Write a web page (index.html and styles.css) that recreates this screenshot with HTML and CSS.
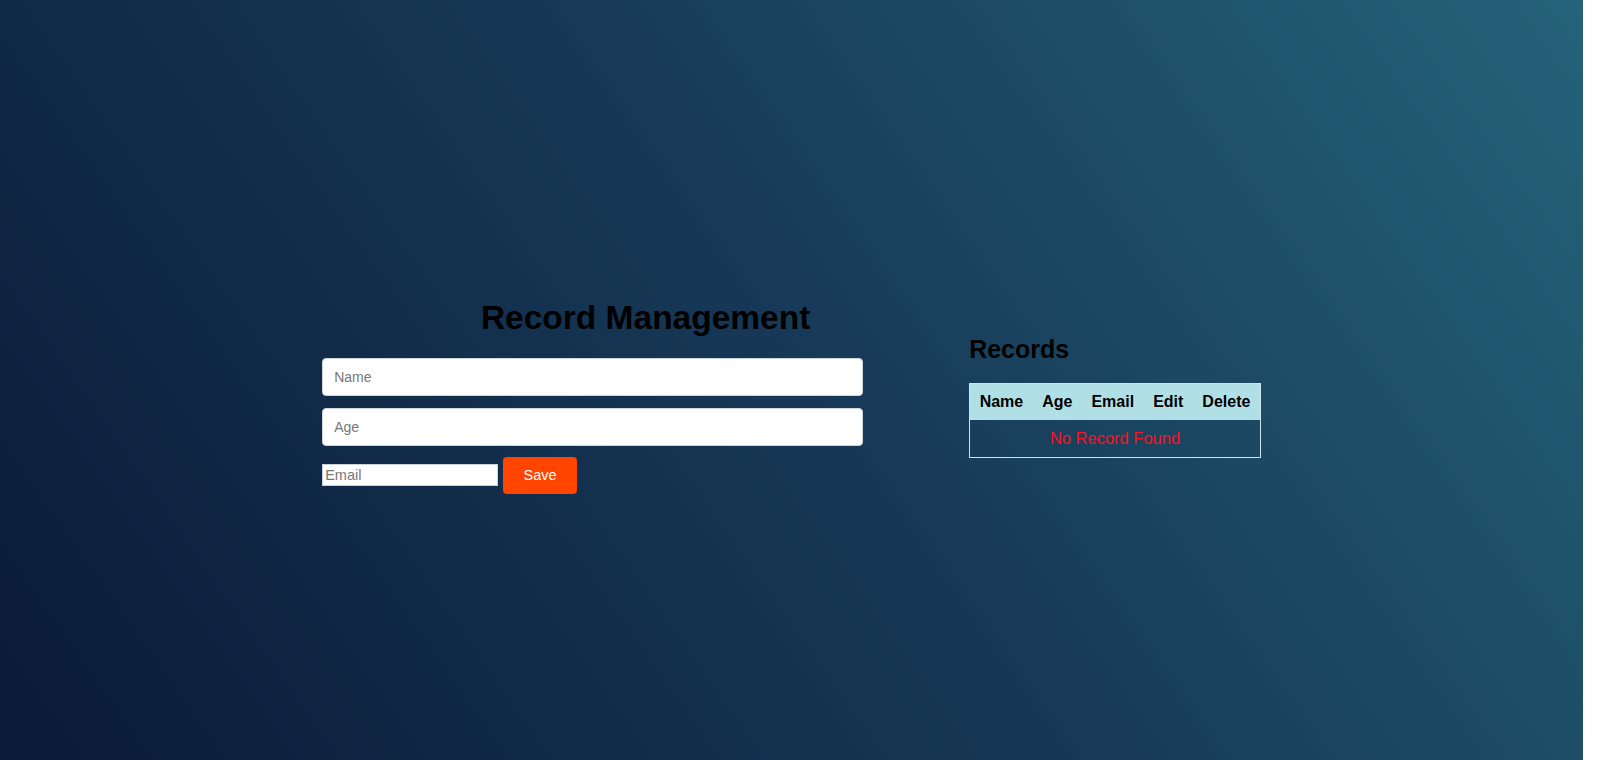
FILE: index.html
```html
<!DOCTYPE html>
<html>
<head>
<meta charset="utf-8">
<title>Record Management</title>
<link rel="stylesheet" href="styles.css">
</head>
<body>
<div class="page">
  <div class="layout">
    <section class="form-col">
      <h1 class="title">Record Management</h1>
      <form class="record-form">
        <input class="field" type="text" placeholder="Name">
        <input class="field" type="text" placeholder="Age">
        <div class="row">
          <input class="email" type="email" placeholder="Email">
          <button class="save" type="button">Save</button>
        </div>
      </form>
    </section>
    <section class="table-col">
      <h2 class="subtitle">Records</h2>
      <table class="records">
        <thead>
          <tr><th>Name</th><th>Age</th><th>Email</th><th>Edit</th><th>Delete</th></tr>
        </thead>
        <tbody>
          <tr><td class="empty" colspan="5">No Record Found</td></tr>
        </tbody>
      </table>
    </section>
  </div>
</div>
</body>
</html>
```

FILE: styles.css
```css
html, body {
  margin: 0;
  padding: 0;
  background: #ffffff;
}

body {
  font-family: "Liberation Sans", Arial, sans-serif;
}

.page {
  width: 1583px;
  height: 760px;
  background: linear-gradient(55deg, #0a1a37 0%, #163856 50%, #246379 100%);
  box-sizing: border-box;
  padding-top: 12px;
}

.layout {
  height: 100%;
  display: flex;
  justify-content: center;
  align-items: center;
}

.form-col {
  width: 647px;
  display: flex;
  flex-direction: column;
}

.title {
  font-size: 33.5px;
  font-weight: bold;
  color: #000;
  text-align: center;
  margin: 20px 0 21px;
  line-height: normal;
}

.record-form {
  display: flex;
  flex-direction: column;
  gap: 12px;
}

.field {
  width: 541px;
  height: 38px;
  box-sizing: border-box;
  border: 1px solid #cfd6dc;
  border-radius: 4px;
  padding: 0 11px;
  font-family: "Liberation Sans", Arial, sans-serif;
  font-size: 14px;
  background: #fff;
  outline: none;
}

.field::placeholder,
.email::placeholder {
  color: #777;
}

.row {
  display: flex;
  align-items: center;
  gap: 5px;
  margin-top: -1px;
}

.email {
  width: 176px;
  height: 22px;
  box-sizing: border-box;
  border: 1px solid #c9d2d8;
  padding: 0 2px;
  font-family: "Liberation Sans", Arial, sans-serif;
  font-size: 14.5px;
  background: #fff;
  outline: none;
}

.save {
  width: 74px;
  height: 37px;
  border: none;
  border-radius: 4px;
  background: #ff4500;
  color: #fff;
  font-family: "Liberation Sans", Arial, sans-serif;
  font-size: 14.5px;
  cursor: pointer;
}

.table-col {
  display: flex;
  flex-direction: column;
}

.subtitle {
  font-size: 25px;
  font-weight: bold;
  color: #000;
  margin: 21px 0 18.5px;
  line-height: normal;
}

.records {
  border-collapse: collapse;
  border: 1px solid #cfe3ea;
  font-size: 16px;
}

.records th {
  background: #b0e0e6;
  color: #000;
  font-weight: bold;
  padding: 9px 9.5px;
}

.records td.empty {
  color: #ff0f1f;
  font-size: 16.5px;
  text-align: center;
  padding: 9px 10px;
}
```
